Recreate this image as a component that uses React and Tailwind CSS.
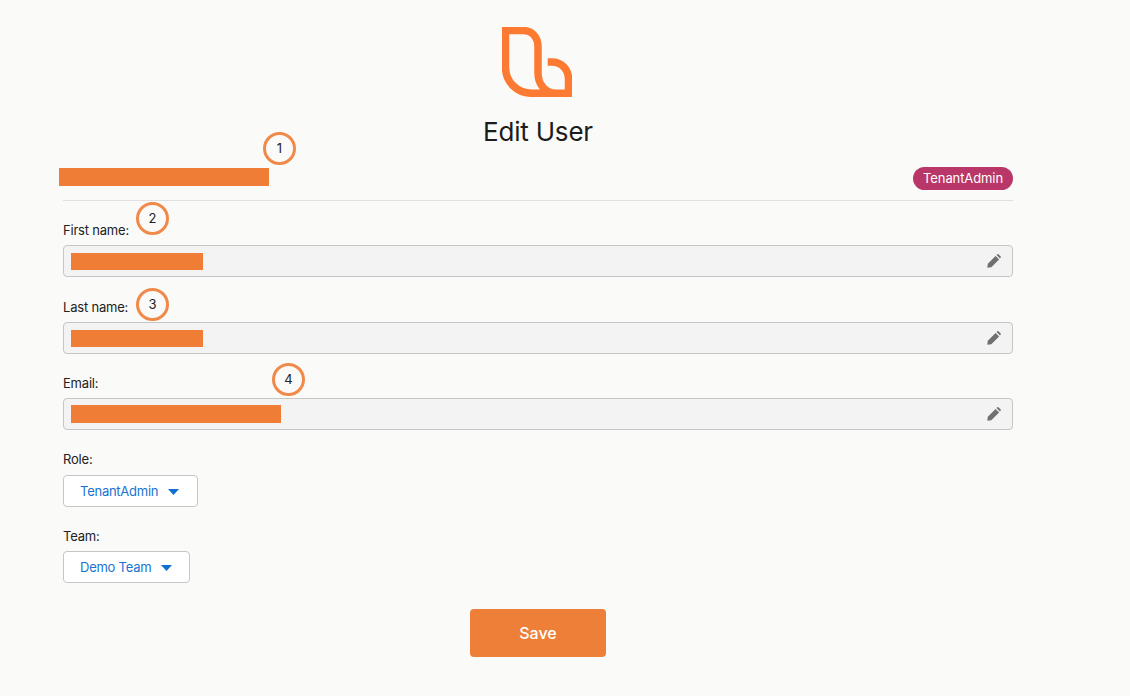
import React from 'react';

const Logo = () => (
  <svg width="70" height="70" viewBox="0 0 70 70" fill="none" className="block mr-[2px]">
    <path d="M45.7 35H50C59 35 66.500 42 66.500 52V66.300H30C15 66.300 3.500 55 3.500 40V3.500H21C30 3.500 36 10 36 20V46C36 57 43 66.300 54 66.300"
      stroke="#fd7a33" strokeWidth="7.500" />
  </svg>
);

const Pencil = () => (
  <svg width="14" height="14" viewBox="0 0 14 14" fill="#707070" className="block">
    <path d="M0.300 13.700 L0.800 9.700 L8.600 1.900 L12.100 5.400 L4.300 13.200 Z" />
    <path d="M9.500 1 L10.400 0.300 C10.700 0 11.100 0 11.400 0.300 L13.700 2.600 C14 2.900 14 3.300 13.700 3.600 L13 4.500 Z" />
  </svg>
);

const Caret = () => (
  <svg width="11" height="6" viewBox="0 0 11 6" fill="#0f6fd1" className="block">
    <path d="M0 0H11L5.500 6Z" />
  </svg>
);

const Callout = ({ n, className }) => (
  <div className={`absolute w-[33px] h-[33px] rounded-full border-[3px] border-[#f08a4b] bg-[#fafaf8] flex items-center justify-center text-[13px] text-[#222] ${className}`}>
    {n}
  </div>
);

function Field({ label, barWidth, barClass = 'h-[17px]', className, n, calloutClass }) {
  return (
    <div className={`relative ${className}`}>
      <label className="block text-[13px] leading-[16px] tracking-[-0.2px] text-[#222]">{label}</label>
      {n && <Callout n={n} className={calloutClass} />}
      <div className="mt-[7px] h-[32px] bg-[#f3f3f4] border border-[#c6c6c6] rounded-[4px] flex items-center justify-between pl-[7px] pr-[11px]">
        <div className={`${barClass} bg-[#f07d35]`} style={{ width: barWidth }} />
        <Pencil />
      </div>
    </div>
  );
}

function Dropdown({ label, value, width, className, buttonClass }) {
  return (
    <div className={className}>
      <label className="block text-[13px] leading-[16px] tracking-[-0.2px] text-[#222]">{label}</label>
      <button className={`${buttonClass} h-[32px] ${width} bg-white border border-[#c6c6c6] rounded-[4px] flex items-center pl-[16px] pt-[1px] gap-[10px] text-[13px] tracking-[-0.25px] text-[#1a73d0]`}>
        {value}
        <Caret />
      </button>
    </div>
  );
}

export default function App() {
  return (
    <div className="min-h-[696px] bg-[#fafaf8] font-['Inter',sans-serif] pl-[63px] pt-[27px]">
      <div className="w-[950px] relative">
        <div className="flex flex-col items-center">
          <Logo />
          <h1 className="mt-[16px] text-[26px] leading-[38px] tracking-[-0.2px] text-[#1c1c1c]">Edit User</h1>
        </div>

        <Callout n="1" className="left-[200px] top-[105px]" />

        <div className="mt-[16px] h-[34px] border-b border-[#e0e0e0] flex items-start justify-between">
          <div className="-ml-[4px] mt-[1px] w-[210px] h-[18px] bg-[#f07d35]" />
          <span className="h-[23px] px-[10px] rounded-full bg-[#b93768] text-white text-[13px] tracking-[-0.1px] leading-[23px]">TenantAdmin</span>
        </div>

        <Field label="First name:" barWidth={132} n="2" calloutClass="left-[73px] -top-[20px]" className="mt-[21px]" />
        <Field label="Last name:" barWidth={132} n="3" calloutClass="left-[73px] -top-[11px]" className="mt-[22px]" />
        <Field label="Email:" barWidth={210} barClass="h-[18px]" n="4" calloutClass="left-[209px] -top-[12px]" className="mt-[21px]" />

        <Dropdown label="Role:" value="TenantAdmin" width="w-[135px]" buttonClass="mt-[8px]" className="mt-[21px]" />
        <Dropdown label="Team:" value="Demo Team" width="w-[127px]" buttonClass="mt-[7px]" className="mt-[21px]" />

        <div className="mt-[26px] flex justify-center">
          <button className="w-[136px] h-[48px] bg-[#ee7f38] rounded-[4px] text-white text-[16px] font-medium">Save</button>
        </div>
      </div>
    </div>
  );
}
